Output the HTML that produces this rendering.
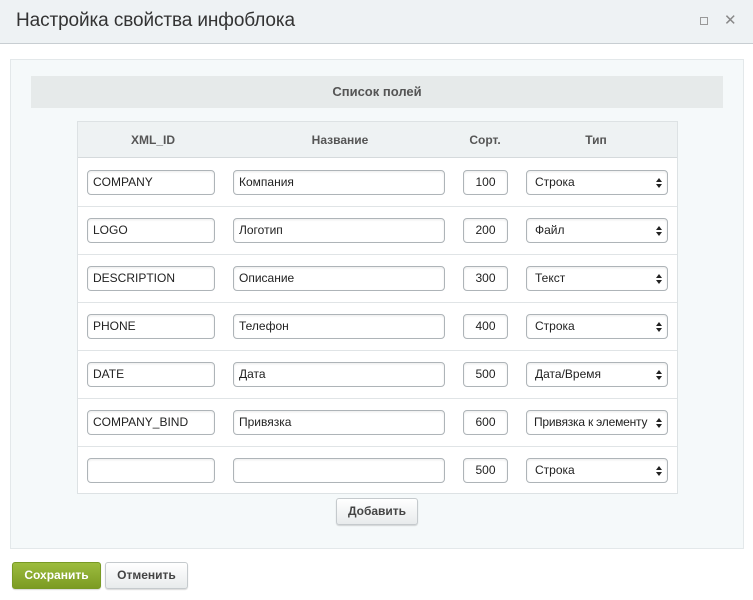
<!DOCTYPE html>
<html><head><meta charset="utf-8"><style>
*{box-sizing:border-box;margin:0;padding:0}
body{width:753px;height:600px;background:#fff;font-family:"Liberation Sans",sans-serif;position:relative;overflow:hidden}
.hdr{position:absolute;left:0;top:0;width:753px;height:44px;background:#eef2f4;border-bottom:1px solid #c8ced2}
.hdr h1{position:absolute;left:16px;top:10px;font-size:19px;font-weight:normal;color:#333;letter-spacing:-0.1px}
.sq{position:absolute;left:700px;top:17px;width:8px;height:8px;border:1px solid #999}
.x{position:absolute;left:724px;top:11px;font-size:15px;color:#888}
.panel{position:absolute;left:10px;top:59px;width:734px;height:490px;background:#f5f9fa;border:1px solid #e3e8ea}
.tt{position:absolute;left:31px;top:76px;width:692px;height:32px;background:#e6eaea;text-align:center;line-height:32px;font-size:13px;font-weight:bold;color:#555}
.tbl{position:absolute;left:77px;top:121px;width:601px;height:373px;background:#fff;border:1px solid #dde2e4}
.th{position:absolute;left:0;top:0;width:599px;height:36px;background:#eef2f3;border-bottom:1px solid #d5dadc}
.th span{position:absolute;top:11px;font-size:12px;font-weight:bold;color:#555;transform:translateX(-50%)}
.row{position:absolute;left:0;width:599px;height:48px;border-bottom:1px solid #e0e4e6}
.in{position:absolute;top:11px;height:25px;border:1px solid #aeb4b8;border-radius:4px;background:#fff;font-size:12px;color:#222;line-height:23px;padding-left:5px;box-shadow:inset 0 1px 2px rgba(0,0,0,.08)}
.c1{left:9px;width:128px}.c2{left:155px;width:212px}.c3{left:385px;width:45px;text-align:center;padding:0}.c4{left:448px;width:142px;padding-left:8px}
.c4:after{content:"";position:absolute;right:5px;top:7px;border:3px solid transparent;border-bottom:4px solid #222;border-top:0}
.c4:before{content:"";position:absolute;right:5px;top:13px;border:3px solid transparent;border-top:4px solid #222;border-bottom:0}
.btn{position:absolute;height:27px;border:1px solid #c5cacd;border-radius:3px;background:linear-gradient(#fff,#e8ebec);font-size:12px;font-weight:bold;color:#444;text-align:center;line-height:25px;box-shadow:0 1px 1px rgba(0,0,0,.15)}
.save{background:linear-gradient(#9cbc3e,#7c9b23);border-color:#789a24;color:#fff}
</style></head><body>
<div class="hdr"><h1>Настройка свойства инфоблока</h1><div class="sq"></div><div class="x">✕</div></div>
<div class="panel"></div>
<div class="tt">Список полей</div>
<div class="tbl">
<div class="th"><span style="left:75px">XML_ID</span><span style="left:262px">Название</span><span style="left:407px">Сорт.</span><span style="left:518px">Тип</span></div>
<div class="row" style="top:37px"><div class="in c1">COMPANY</div><div class="in c2">Компания</div><div class="in c3">100</div><div class="in c4">Строка</div></div>
<div class="row" style="top:85px"><div class="in c1">LOGO</div><div class="in c2">Логотип</div><div class="in c3">200</div><div class="in c4">Файл</div></div>
<div class="row" style="top:133px"><div class="in c1">DESCRIPTION</div><div class="in c2">Описание</div><div class="in c3">300</div><div class="in c4">Текст</div></div>
<div class="row" style="top:181px"><div class="in c1">PHONE</div><div class="in c2">Телефон</div><div class="in c3">400</div><div class="in c4">Строка</div></div>
<div class="row" style="top:229px"><div class="in c1">DATE</div><div class="in c2">Дата</div><div class="in c3">500</div><div class="in c4">Дата/Время</div></div>
<div class="row" style="top:277px"><div class="in c1">COMPANY_BIND</div><div class="in c2">Привязка</div><div class="in c3">600</div><div class="in c4" style="padding-left:7px;letter-spacing:-0.2px">Привязка к элементу</div></div>
<div class="row" style="top:325px;border:0"><div class="in c1"></div><div class="in c2"></div><div class="in c3">500</div><div class="in c4">Строка</div></div>
</div>
<div class="btn" style="left:336px;top:498px;width:82px">Добавить</div>
<div class="btn save" style="left:12px;top:562px;width:89px">Сохранить</div>
<div class="btn" style="left:105px;top:562px;width:83px">Отменить</div>
</body></html>
